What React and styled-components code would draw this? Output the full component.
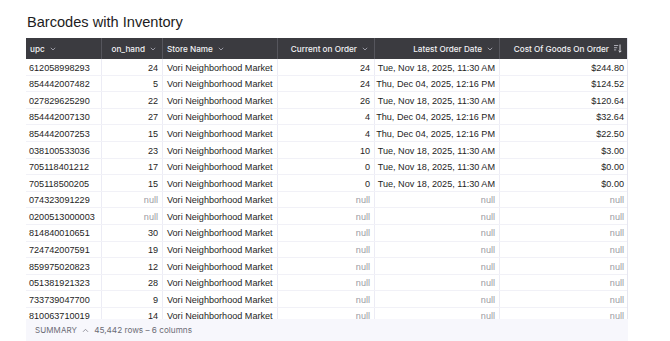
import React from 'react'
import styled, { createGlobalStyle } from 'styled-components'

const GlobalStyle = createGlobalStyle`
    body {
        margin: 0;
        background: #ffffff;
        font-family: Inter, "Liberation Sans", sans-serif;
    }
`

const columns = [
    { key: 'upc', label: 'upc', width: 76, align: 'left' },
    { key: 'onHand', label: 'on_hand', width: 61, align: 'right' },
    { key: 'store', label: 'Store Name', width: 115, align: 'left' },
    { key: 'current', label: 'Current on Order', width: 97, align: 'right' },
    { key: 'latest', label: 'Latest Order Date', width: 125, align: 'right' },
    { key: 'cost', label: 'Cost Of Goods On Order', width: 128, align: 'right', sorted: true },
]

const STORE = 'Vori Neighborhood Market'
const NOV = 'Tue, Nov 18, 2025, 11:30 AM'
const DEC = 'Thu, Dec 04, 2025, 12:16 PM'

const rows = [
    ['612058998293', 24, STORE, 24, NOV, '$244.80'],
    ['854442007482', 5, STORE, 24, DEC, '$124.52'],
    ['027829625290', 22, STORE, 26, NOV, '$120.64'],
    ['854442007130', 27, STORE, 4, DEC, '$32.64'],
    ['854442007253', 15, STORE, 4, DEC, '$22.50'],
    ['038100533036', 23, STORE, 10, NOV, '$3.00'],
    ['705118401212', 17, STORE, 0, NOV, '$0.00'],
    ['705118500205', 15, STORE, 0, NOV, '$0.00'],
    ['074323091229', null, STORE, null, null, null],
    ['0200513000003', null, STORE, null, null, null],
    ['814840010651', 30, STORE, null, null, null],
    ['724742007591', 19, STORE, null, null, null],
    ['859975020823', 12, STORE, null, null, null],
    ['051381921323', 28, STORE, null, null, null],
    ['733739047700', 9, STORE, null, null, null],
    ['810063710019', 14, STORE, null, null, null],
]

const Chevron = () => (
    <svg width="6" height="4" viewBox="0 0 6 4">
        <path d="M0.8 0.8 L3 3 L5.2 0.8" fill="none" stroke="#a4a4ae" strokeWidth="0.9" />
    </svg>
)

const SortIcon = () => (
    <svg width="8" height="9" viewBox="0 0 8 9">
        <path d="M0 1.5 H4.2 M0 3.7 H3.2 M0 5.9 H2.2" stroke="#b8b8c2" strokeWidth="0.9" />
        <path d="M6 0.5 V8.2 M4.6 6.8 L6 8.2 L7.4 6.8" fill="none" stroke="#e6e6ec" strokeWidth="0.9" />
    </svg>
)

const App = () => {
    return <Page>
        <GlobalStyle />
        <Title>Barcodes with Inventory</Title>
        <TableFrame>
            <Grid>
                <HeaderRow>
                    {columns.map(c => (
                        <HeaderCell key={c.key} $align={c.align} $w={c.width}>
                            <span>{c.label}</span>
                            {c.sorted ? <SortIcon /> : <Chevron />}
                        </HeaderCell>
                    ))}
                </HeaderRow>
                {rows.map((r, i) => (
                    <Row key={i}>
                        {columns.map((c, j) => (
                            <Cell
                                key={c.key}
                                $align={c.align}
                                $w={c.width}
                                $null={r[j] === null}
                            >
                                {r[j] === null ? 'null' : r[j]}
                            </Cell>
                        ))}
                    </Row>
                ))}
            </Grid>
            <Summary>
                <SummaryLabel>Summary</SummaryLabel>
                <svg width="7" height="5" viewBox="0 0 7 5">
                    <path d="M1 3.8 L3.5 1.3 L6 3.8" fill="none" stroke="#8a8a94" strokeWidth="0.9" />
                </svg>
                <SummaryText>45,442 rows – 6 columns</SummaryText>
            </Summary>
        </TableFrame>
    </Page>
}

const Page = styled.div`
    width: 670px;
    height: 341px;
    overflow: hidden;
    padding: 12px 0 0 26px;
    box-sizing: border-box;
`

const Title = styled.h1`
    margin: 0 0 8px 1px;
    padding-top: 1px;
    height: 17px;
    font-family: "Liberation Sans", Inter, sans-serif;
    font-size: 14.6px;
    font-weight: 400;
    color: #1c1c22;
    line-height: 18px;
`

const TableFrame = styled.div`
    width: 602px;
    display: flex;
    flex-direction: column;
`

const Grid = styled.div`
    height: 281px;
    overflow: hidden;
    border-right: 1px solid #e6e6f0;
    box-sizing: border-box;
`

const HeaderRow = styled.div`
    display: flex;
    height: 21px;
    background: #3b3b40;
`

const HeaderCell = styled.div`
    flex: 0 0 ${p => p.$w}px;
    display: flex;
    align-items: center;
    justify-content: ${p => (p.$align === 'right' ? 'flex-end' : 'flex-start')};
    gap: 5px;
    box-sizing: border-box;
    padding: 0 6px 0 4px;
    border-right: 1px solid #56565d;
    color: #f2f2f5;
    font-size: 8.2px;
    font-weight: 500;
    white-space: nowrap;

    &:last-child {
        border-right: none;
        padding-right: 6px;
    }
`

const Row = styled.div`
    display: flex;
    height: 16.6px;
    border-bottom: 1px solid #f1f1f7;
    box-sizing: border-box;
`

const Cell = styled.div`
    flex: 0 0 ${p => p.$w}px;
    display: flex;
    align-items: center;
    justify-content: ${p => (p.$align === 'right' ? 'flex-end' : 'flex-start')};
    box-sizing: border-box;
    padding: 1.5px 4px 0 4px;
    border-right: 1px solid #ececf5;
    color: ${p => (p.$null ? '#9a9aa2' : '#1e1e24')};
    font-family: "Liberation Sans", Inter, sans-serif;
    font-size: 9.1px;
    white-space: nowrap;
    overflow: hidden;

    &:first-child {
        padding-left: 3px;
    }

    &:last-child {
        border-right: none;
    }
`

const Summary = styled.div`
    display: flex;
    align-items: center;
    gap: 5px;
    height: 22px;
    padding-left: 9px;
    background: #f7f7fc;
`

const SummaryLabel = styled.span`
    text-transform: uppercase;
    font-size: 8px;
    color: #6c6c76;
    letter-spacing: 0.1px;
`

const SummaryText = styled.span`
    font-size: 8.2px;
    color: #6c6c76;
`

export default App
